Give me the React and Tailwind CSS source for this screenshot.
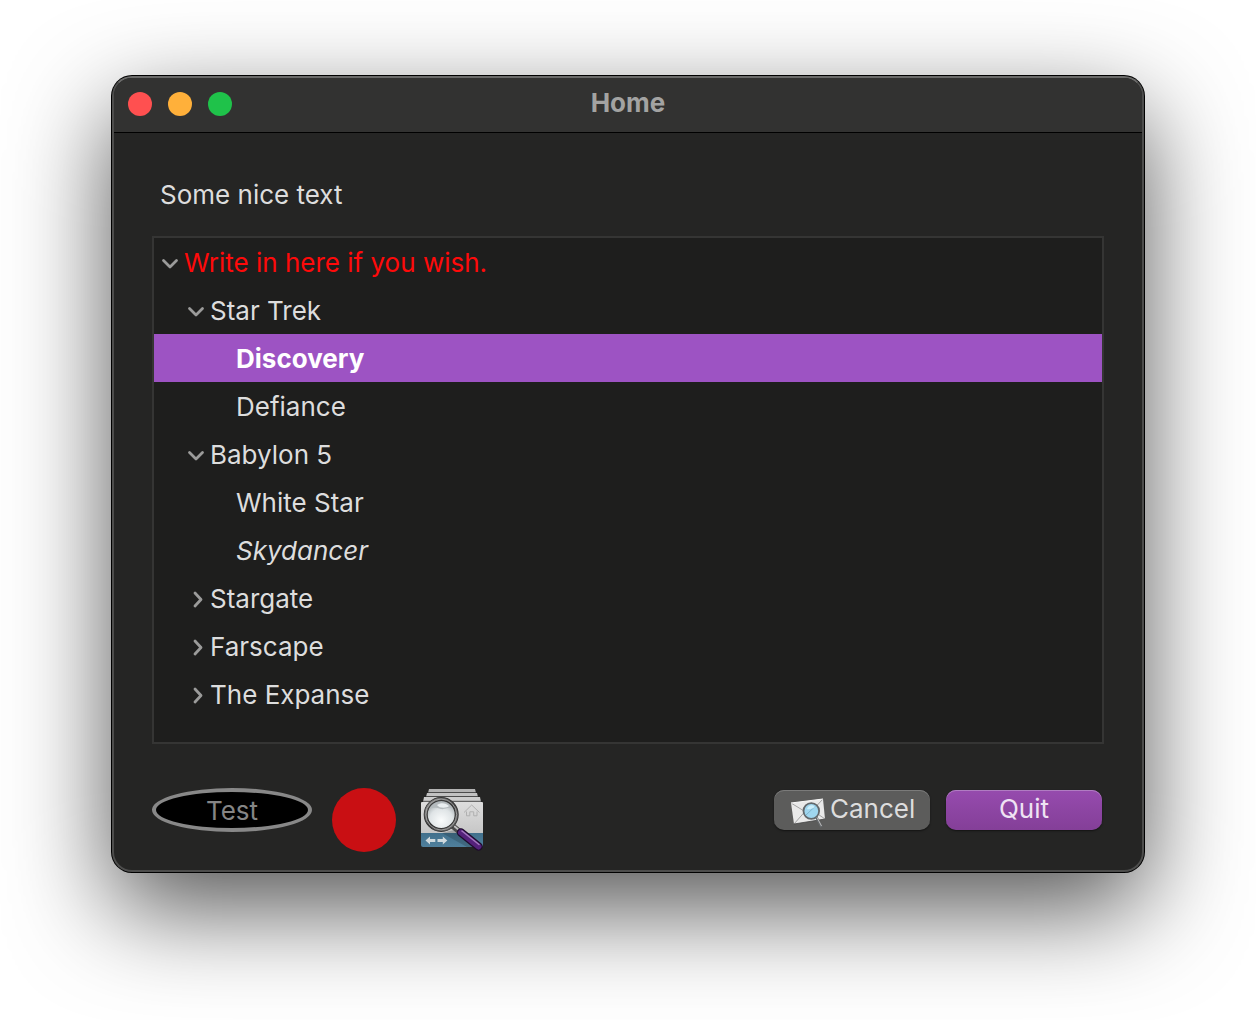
import React, { useState } from "react";

const tree = {
  id: "root",
  label: "Write in here if you wish.",
  className: "text-[#ff0a0a]",
  children: [
    {
      id: "trek",
      label: "Star Trek",
      children: [
        { id: "discovery", label: "Discovery", className: "font-bold" },
        { id: "defiance", label: "Defiance" },
      ],
    },
    {
      id: "babylon",
      label: "Babylon 5",
      children: [
        { id: "whitestar", label: "White Star" },
        { id: "skydancer", label: "Skydancer", className: "italic" },
      ],
    },
    { id: "stargate", label: "Stargate", children: [] },
    { id: "farscape", label: "Farscape", children: [] },
    { id: "expanse", label: "The Expanse", children: [] },
  ],
};

const indents = ["pl-[6px]", "pl-8", "pl-[58px]"];

function Chevron({ open }) {
  return (
    <svg
      viewBox="0 0 20 20"
      className="size-5 shrink-0"
      fill="none"
      stroke="#9b9b9a"
      strokeWidth="2.8"
      strokeLinecap="round"
      strokeLinejoin="round"
      aria-hidden="true"
    >
      <path d={open ? "M3.5 7.5 10 14 16.5 7.5" : "M9 4 15 10.500 9 17"} />
    </svg>
  );
}

function TreeNode({ node, level, open, selected, onToggle, onSelect }) {
  const isOpen = open.includes(node.id);
  const isSelected = selected === node.id;

  return (
    <li role="treeitem" aria-expanded={node.children ? isOpen : undefined} aria-selected={isSelected}>
      <button
        type="button"
        onClick={() => (node.children ? onToggle(node.id) : onSelect(node.id))}
        className={`flex h-12 w-full items-center gap-1 pt-[2px] text-left ${indents[level]} ${
          isSelected ? "bg-[#9d53c3] text-white" : ""
        }`}
      >
        {node.children ? <Chevron open={isOpen} /> : <span className="w-5 shrink-0" />}
        <span className={node.className || ""}>{node.label}</span>
      </button>
      {isOpen && node.children.length > 0 && (
        <ul role="group">
          {node.children.map((child) => (
            <TreeNode
              key={child.id}
              node={child}
              level={level + 1}
              open={open}
              selected={selected}
              onToggle={onToggle}
              onSelect={onSelect}
            />
          ))}
        </ul>
      )}
    </li>
  );
}

// stack of pages under a magnifying glass
function BrowseIcon() {
  return (
    <svg viewBox="0 0 64 64" className="size-16" aria-hidden="true">
      <defs>
        <linearGradient id="page" x1="0" y1="0" x2="0" y2="1">
          <stop offset="0" stopColor="#dedede" />
          <stop offset="1" stopColor="#c6c6c6" />
        </linearGradient>
        <linearGradient id="band" x1="0" y1="0" x2="0" y2="1">
          <stop offset="0" stopColor="#41708c" />
          <stop offset="1" stopColor="#50809c" />
        </linearGradient>
        <radialGradient id="glass" cx="0.5" cy="0.7" r="0.65">
          <stop offset="0" stopColor="#fafcfc" />
          <stop offset="0.6" stopColor="#dfe4e6" />
          <stop offset="1" stopColor="#9fa6a9" />
        </radialGradient>
        <linearGradient id="rim" x1="0" y1="0" x2="1" y2="1">
          <stop offset="0" stopColor="#8b8b8b" />
          <stop offset="0.5" stopColor="#3c3c3c" />
          <stop offset="1" stopColor="#6a6a6a" />
        </linearGradient>
      </defs>
      <path d="M9 1h46l1 4H8z" fill="#b3b3b3" />
      <path d="M7 5h50l1 4H6z" fill="#c2c2c2" />
      <path d="M4 9h56l1 5H3z" fill="#cdcdcd" />
      <path d="M8 4.500h48M6 8.500h52M3 13.300h58" stroke="#4c4c4c" strokeWidth="1" />
      <path d="M2 14h60a1 1 0 0 1 1 1v31H1V15a1 1 0 0 1 1-1z" fill="url(#page)" />
      <path d="M1 45h62v12a2 2 0 0 1-2 2H3a2 2 0 0 1-2-2z" fill="url(#band)" />
      <path
        d="M44 24.500 51.700 17 59.500 24.500M46.500 23.500v4.300h3.300v-4h3.900v4h3.300v-4.300"
        fill="none"
        stroke="#b0b0b0"
        strokeWidth="1"
      />
      <path
        d="M5.500 52.500l4.500-4v2.500h5.300v3H10v2.500zM27.300 52.500l-4.500-4v2.500h-5.300v3h5.300v2.500z"
        fill="#cfd9dd"
      />
      <path d="M22 45 34 42 42 48 55 59H47z" fill="#1d2c35" opacity="0.25" />
      <path d="M32 37.500 40 44" stroke="#4b4b4b" strokeWidth="5.500" />
      <path d="M33 37 40.500 43.500" stroke="#c0c0c0" strokeWidth="1.800" />
      <path d="M41 44.500 58.500 58.500" stroke="#1e0c2c" strokeWidth="8.500" strokeLinecap="round" />
      <path d="M41 44.500 58.500 58.500" stroke="#54217a" strokeWidth="6" strokeLinecap="round" />
      <path d="M42 43 59 56.500" stroke="#a478bf" strokeWidth="1.500" strokeLinecap="round" />
      <circle cx="21.200" cy="26.500" r="15" fill="url(#glass)" />
      <path d="M10 21c4-9 18-10 23 0-5-3-8 1-12 0s-7-2-11 0z" fill="#b4babd" />
      <path d="M17 17c4-3 9-2 12 1-2 2-9 3-12-1z" fill="#e9eef0" />
      <circle cx="21.200" cy="26.500" r="15.500" fill="none" stroke="#2c2c2c" strokeWidth="4" />
      <circle cx="21.200" cy="26.500" r="15.500" fill="none" stroke="url(#rim)" strokeWidth="2.600" />
      <circle cx="21.200" cy="26.500" r="15.500" fill="none" stroke="#bdbdbd" strokeWidth="0.700" />
    </svg>
  );
}

function MailSearchIcon() {
  return (
    <svg viewBox="0 0 36 32" className="h-8 w-9 shrink-0" aria-hidden="true">
      <path d="M1 6 33 2 35 22 4 27z" fill="#e9e9e9" />
      <path d="M1 6 19 17 33 2M4 27 15 14.500M35 22 22 13" fill="none" stroke="#a2a2a2" strokeWidth="1" />
      <path d="M1 6 33 2" stroke="#fafafa" strokeWidth="1" />
      <path d="M4 27 35 22" stroke="#444444" strokeWidth="0.800" />
      <circle cx="21.300" cy="14" r="7.800" fill="#9fd6ef" stroke="#62676b" strokeWidth="1.800" />
      <path d="M16 18 26 8.500" stroke="#7fb4cd" strokeWidth="1" />
      <path d="M17 12c1-4 6-5 8-2-2 1-5 3-8 2z" fill="#caeefb" />
      <path d="M26.500 20.500 31.500 30" stroke="#65696c" strokeWidth="2.600" />
      <path d="M27 20.500 31.500 29" stroke="#bdbdbd" strokeWidth="1" />
    </svg>
  );
}

export default function App() {
  const [open, setOpen] = useState(["root", "trek", "babylon"]);
  const [selected, setSelected] = useState("discovery");

  const handleToggle = (id) => {
    setOpen((prev) => (prev.includes(id) ? prev.filter((x) => x !== id) : [...prev, id]));
  };

  return (
    <div className="min-h-screen bg-white px-28 pt-[76px] pb-[148px] font-['Inter','Liberation_Sans',sans-serif] text-[26px] leading-8 text-[#dddddd]">
      <div className="overflow-hidden rounded-[20px] border-2 border-[#4d4d4c] border-t-[#6a6a69] bg-[#252524] shadow-[0_0_0_1px_#000,0_36px_100px_rgba(0,0,0,0.68)]">
        <header className="grid h-[55px] grid-cols-3 items-center border-b border-black bg-[#323231] px-[14px] pb-[2px]">
          <div className="flex gap-4">
            <button type="button" aria-label="Close" className="size-6 rounded-full bg-[#ff5050]" />
            <button type="button" aria-label="Minimize" className="size-6 rounded-full bg-[#ffb03a]" />
            <button type="button" aria-label="Zoom" className="size-6 rounded-full bg-[#1fc24a]" />
          </div>
          <h1 className="pb-[2px] text-center font-bold text-[#a3a3a2]">Home</h1>
        </header>

        <main className="px-[38px] pt-[46px] pb-[18px]">
          <p className="px-2">Some nice text</p>

          <ul role="tree" className="mt-[25px] min-h-[508px] border-2 border-[#353534] bg-[#1e1e1d]">
            <TreeNode
              node={tree}
              level={0}
              open={open}
              selected={selected}
              onToggle={handleToggle}
              onSelect={setSelected}
            />
          </ul>

          <div className="mt-11 flex items-start">
            <button
              type="button"
              className="h-11 w-40 rounded-[50%] border-4 border-[#888888] bg-black pt-[2px] text-[#858585]"
            >
              Test
            </button>
            <button type="button" aria-label="Record" className="ml-5 size-16 rounded-full bg-[#c90f13]" />
            <button type="button" aria-label="Browse" className="ml-6">
              <BrowseIcon />
            </button>
            <div className="mt-[2px] mr-[2px] ml-auto flex gap-4">
              <button
                type="button"
                className="flex h-10 w-[156px] items-center gap-1 rounded-[10px] bg-[#5c5c5b] pl-4 shadow-[inset_0_1px_0_#7b7b7a,0_1px_2px_rgba(0,0,0,0.5)]"
              >
                <span className="pt-[6px]">
                  <MailSearchIcon />
                </span>
                <span className="pb-[2px]">Cancel</span>
              </button>
              <button
                type="button"
                className="h-10 w-[156px] rounded-[10px] bg-linear-to-b from-[#964bae] to-[#843f98] pb-[2px] text-[#efe2f3] shadow-[inset_0_1px_0_#b07cc2,0_1px_2px_rgba(0,0,0,0.5)]"
              >
                Quit
              </button>
            </div>
          </div>
        </main>
      </div>
    </div>
  );
}
